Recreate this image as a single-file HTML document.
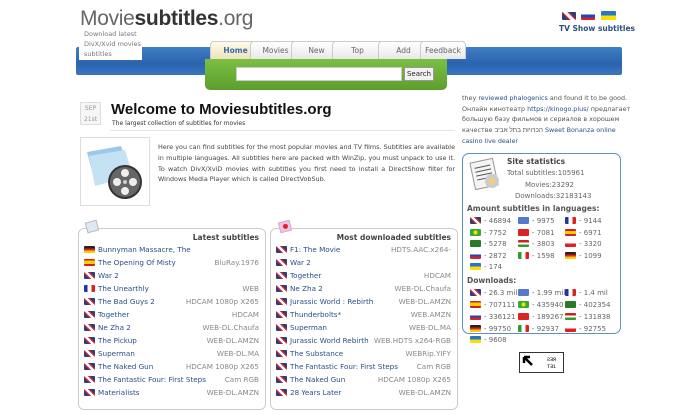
<!DOCTYPE html>
<html><head><meta charset="utf-8"><style>
*{margin:0;padding:0;box-sizing:border-box}
body{width:700px;height:416px;background:#fff;font-family:Verdana,"DejaVu Sans","Liberation Sans",sans-serif;font-size:7px;color:#444;position:relative;overflow:hidden}
.a{position:absolute}
a{color:#2a4f86;text-decoration:none}
.f{display:inline-block;width:11px;height:7px;vertical-align:-1px;margin-right:3px;border-radius:1px}
.uk{background:linear-gradient(45deg,#2b3e7a 30%,#c8283c 30%,#c8283c 40%,#fff 40%,#fff 60%,#c8283c 60%,#c8283c 70%,#2b3e7a 70%)}
.de{background:linear-gradient(#222 33%,#d22 33%,#d22 66%,#fc0 66%)}
.es{background:linear-gradient(#c22 25%,#fc0 25%,#fc0 75%,#c22 75%)}
.fr{background:linear-gradient(90deg,#23a 33%,#fff 33%,#fff 66%,#d22 66%)}
.br{background:radial-gradient(circle,#fd0 30%,#3a3 32%)}
.tr{background:#d22}
.it{background:linear-gradient(90deg,#393 33%,#fff 33%,#fff 66%,#d22 66%)}
.hu{background:linear-gradient(#c22 33%,#fff 33%,#fff 66%,#393 66%)}
.ru{background:linear-gradient(#fff 33%,#24b 33%,#24b 66%,#d22 66%)}
.ua{background:linear-gradient(#27c 50%,#fd0 50%)}
.pl{background:linear-gradient(#fff 50%,#d22 50%)}
.sa{background:#2a7a2a}
.gr{background:#5577cc}
.box{border:1px solid #ccc;border-radius:6px;background:#fff}
.row{position:absolute;left:5px;right:6px;height:13px;line-height:13px;font-size:7.2px;white-space:nowrap}
.row span.r{position:absolute;right:0;color:#888}
.tab{position:absolute;top:41px;height:18px;width:51px;border:1px solid #ccc;border-bottom:none;border-radius:4px 4px 0 0;background:linear-gradient(#fff,#e8e8e8);text-align:center;line-height:17px;font-size:7.5px;color:#666}
.st{position:absolute;font-size:7px;color:#666;white-space:nowrap}
</style></head><body>
<div class="a" style="left:80px;top:7px;font-family:'Liberation Sans',Arial,sans-serif;font-size:21px;color:#555;letter-spacing:-0.3px"><span style="color:#666">Movie</span><b style="color:#333">subtitles</b><span style="color:#666">.org</span></div>
<div class="a" style="left:76px;top:47px;width:546px;height:28px;background:linear-gradient(#3f7fc6,#2a63ad 60%,#3a76bf);border-radius:2px"></div>
<div class="a" style="left:79px;top:29px;width:63px;height:31px;background:#fff;font-size:6.5px;line-height:10px;color:#777;padding-left:5px">Download latest<br>DivX/Xvid movies<br>subtitles</div>
<div class="tab" style="left:210px;background:linear-gradient(#fffbe8,#ece2be);color:#3b6aa0;font-weight:bold">Home</div>
<div class="tab" style="left:250px">Movies</div>
<div class="tab" style="left:291px">New</div>
<div class="tab" style="left:332px">Top</div>
<div class="tab" style="left:378px">Add</div>
<div class="tab" style="left:420px;width:46px">Feedback</div>
<div class="a" style="left:205px;top:59px;width:242px;height:31px;background:linear-gradient(#7cbf43,#5d9e2c);border-radius:0 0 5px 5px"></div>
<div class="a" style="left:236px;top:67px;width:166px;height:14px;background:#fff;border:1px solid #ccc"></div>
<div class="a" style="left:404px;top:67px;width:30px;height:14px;background:#f2f2f2;border:1px solid #999;font-size:7px;line-height:12px;text-align:center;color:#222">Search</div>
<div class="a" style="left:562px;top:12px;width:14px;height:9px" ><span class="f uk" style="width:14px;height:8px"></span></div>
<div class="a" style="left:581px;top:12px"><span class="f ru" style="width:14px;height:8px"></span></div>
<div class="a" style="left:601px;top:11px"><span class="f ua" style="width:15px;height:9px"></span></div>
<div class="a" style="left:559px;top:24px;font-size:7.5px;font-weight:bold;color:#2a4f86">TV Show subtitles</div>

<div class="a" style="left:80px;top:102px;width:21px;height:23px;border:1px solid #ddd;background:#f6f6f6;font-size:6px;color:#999;text-align:center;line-height:11px">SEP<br>21st</div>
<div class="a" style="left:111px;top:101px;font-family:'Liberation Sans',Arial,sans-serif;font-weight:bold;font-size:15px;color:#111">Welcome to Moviesubtitles.org</div>
<div class="a" style="left:112px;top:120px;font-size:6px;color:#333">The largest collection of subtitles for movies</div>
<div class="a" style="left:110px;top:130px;width:345px;height:1px;background:#e6e6e6"></div>
<div class="a" style="left:80px;top:137px;width:70px;height:69px;border:1px solid #ddd;background:#fff">
<svg width="68" height="67" viewBox="0 0 68 67"><path d="M6 14 L40 8 L50 34 L14 44 Z" fill="#9cc9ea"/><path d="M8 18 L44 12 L52 38 L14 48 Z" fill="#c5e2f5"/><circle cx="44" cy="44" r="17" fill="#333"/><circle cx="44" cy="44" r="15" fill="#666"/><circle cx="44" cy="35" r="4" fill="#eee"/><circle cx="44" cy="53" r="4" fill="#eee"/><circle cx="36" cy="44" r="4" fill="#eee"/><circle cx="52" cy="44" r="4" fill="#eee"/><circle cx="44" cy="44" r="2" fill="#ccc"/></svg></div>
<div class="a" style="left:158px;top:142px;width:297px;font-size:6.4px;line-height:10.8px;color:#444;text-align:justify">Here you can find subtitles for the most popular movies and TV films. Subtitles are available in multiple languages. All subtitles here are packed with WinZip, you must unpack to use it. To watch DivX/XviD movies with subtitles you first need to install a DirectShow filter for Windows Media Player which is called DirectVobSub.</div>

<div class="a box" style="left:78px;top:228px;width:188px;height:182px">
<div class="a" style="right:6px;top:4px;font-weight:bold;font-size:7.5px;color:#444">Latest subtitles</div>
<div class="row" style="top:14px"><span class="f de"></span><a>Bunnyman Massacre, The</a></div>
<div class="row" style="top:27px"><span class="f es"></span><a>The Opening Of Misty</a><span class="r">BluRay.1976</span></div>
<div class="row" style="top:40px"><span class="f uk"></span><a>War 2</a></div>
<div class="row" style="top:53px"><span class="f fr"></span><a>The Unearthly</a><span class="r">WEB</span></div>
<div class="row" style="top:66px"><span class="f uk"></span><a>The Bad Guys 2</a><span class="r">HDCAM 1080p X265</span></div>
<div class="row" style="top:79px"><span class="f uk"></span><a>Together</a><span class="r">HDCAM</span></div>
<div class="row" style="top:92px"><span class="f uk"></span><a>Ne Zha 2</a><span class="r">WEB-DL.Chaufa</span></div>
<div class="row" style="top:105px"><span class="f uk"></span><a>The Pickup</a><span class="r">WEB-DL.AMZN</span></div>
<div class="row" style="top:118px"><span class="f uk"></span><a>Superman</a><span class="r">WEB-DL.MA</span></div>
<div class="row" style="top:131px"><span class="f uk"></span><a>The Naked Gun</a><span class="r">HDCAM 1080p X265</span></div>
<div class="row" style="top:144px"><span class="f uk"></span><a>The Fantastic Four: First Steps</a><span class="r">Cam RGB</span></div>
<div class="row" style="top:157px"><span class="f uk"></span><a>Materialists</a><span class="r">WEB-DL.AMZN</span></div>
</div>
<div class="a" style="left:86px;top:221px;width:12px;height:11px;background:#dde9f5;border:1px solid #bbb;transform:rotate(-15deg)"></div>

<div class="a box" style="left:270px;top:228px;width:188px;height:182px">
<div class="a" style="right:6px;top:4px;font-weight:bold;font-size:7.5px;color:#444">Most downloaded subtitles</div>
<div class="row" style="top:14px"><span class="f uk"></span><a>F1: The Movie</a><span class="r">HDTS.AAC.x264-</span></div>
<div class="row" style="top:27px"><span class="f uk"></span><a>War 2</a></div>
<div class="row" style="top:40px"><span class="f uk"></span><a>Together</a><span class="r">HDCAM</span></div>
<div class="row" style="top:53px"><span class="f uk"></span><a>Ne Zha 2</a><span class="r">WEB-DL.Chaufa</span></div>
<div class="row" style="top:66px"><span class="f uk"></span><a>Jurassic World : Rebirth</a><span class="r">WEB-DL.AMZN</span></div>
<div class="row" style="top:79px"><span class="f uk"></span><a>Thunderbolts*</a><span class="r">WEB.AMZN</span></div>
<div class="row" style="top:92px"><span class="f uk"></span><a>Superman</a><span class="r">WEB-DL.MA</span></div>
<div class="row" style="top:105px"><span class="f uk"></span><a>Jurassic World Rebirth</a><span class="r">WEB.HDTS x264-RGB</span></div>
<div class="row" style="top:118px"><span class="f uk"></span><a>The Substance</a><span class="r">WEBRip.YIFY</span></div>
<div class="row" style="top:131px"><span class="f uk"></span><a>The Fantastic Four: First Steps</a><span class="r">Cam RGB</span></div>
<div class="row" style="top:144px"><span class="f uk"></span><a>The Naked Gun</a><span class="r">HDCAM 1080p X265</span></div>
<div class="row" style="top:157px"><span class="f uk"></span><a>28 Years Later</a><span class="r">WEB-DL.AMZN</span></div>
</div>
<div class="a" style="left:279px;top:221px;width:12px;height:11px;background:#fbe;border:1px solid #bbb;transform:rotate(-15deg)"><div style="width:5px;height:5px;background:#d22;border-radius:50%;margin:2px 3px"></div></div>

<div class="a" style="left:462px;top:93px;width:170px;font-size:6.4px;line-height:10.6px;color:#555;white-space:nowrap">they <a>reviewed</a> <a>phalogenics</a> and found it to be good.<br>Онлайн кинотеатр <a>https://kinogo.plus/</a> предлагает<br>большую базу фильмов и сериалов в хорошем<br>качестве <span style="font-family:'Liberation Sans','DejaVu Sans',sans-serif">הכרויות בתל אביב</span> <a>Sweet Bonanza online</a><br><a>casino live dealer</a></div>

<div class="a" style="left:462px;top:153px;width:159px;height:181px;border:1px solid #5d8fc8;border-radius:7px;background:#fff"></div>
<div class="a" style="left:472px;top:160px;width:24px;height:28px;background:#f4f4f4;border:1px solid #999;transform:rotate(-12deg)"><div style="margin:5px 3px;height:1px;background:#555;box-shadow:0 4px #555,0 8px #555,0 12px #555"></div></div>
<div class="a" style="left:485px;top:174px;width:14px;height:14px;border-radius:50%;background:radial-gradient(#fc6 25%,#ccc 30%)"></div>
<div class="st" style="left:507px;top:157px;font-weight:bold;color:#444;font-size:7.5px">Site statistics</div>
<div class="st" style="left:507px;top:169px">Total subtitles:105961</div>
<div class="st" style="left:525px;top:181px">Movies:23292</div>
<div class="st" style="left:515px;top:192px">Downloads:32183143</div>
<div class="st" style="left:467px;top:204px;font-weight:bold;color:#555;font-size:7.5px">Amount subtitles in languages:</div>
<div class="st" style="left:470px;top:217px"><span class="f uk"></span>- 46894</div>
<div class="st" style="left:518px;top:217px"><span class="f gr"></span>- 9975</div>
<div class="st" style="left:565px;top:217px"><span class="f fr"></span>- 9144</div>
<div class="st" style="left:470px;top:229px"><span class="f br"></span>- 7752</div>
<div class="st" style="left:518px;top:229px"><span class="f tr"></span>- 7081</div>
<div class="st" style="left:565px;top:229px"><span class="f es"></span>- 6971</div>
<div class="st" style="left:470px;top:240px"><span class="f sa"></span>- 5278</div>
<div class="st" style="left:518px;top:240px"><span class="f hu"></span>- 3803</div>
<div class="st" style="left:565px;top:240px"><span class="f pl"></span>- 3320</div>
<div class="st" style="left:470px;top:252px"><span class="f ru"></span>- 2872</div>
<div class="st" style="left:518px;top:252px"><span class="f it"></span>- 1598</div>
<div class="st" style="left:565px;top:252px"><span class="f de"></span>- 1099</div>
<div class="st" style="left:470px;top:263px"><span class="f ua"></span>- 174</div>
<div class="st" style="left:467px;top:276px;font-weight:bold;color:#555;font-size:7.5px">Downloads:</div>
<div class="st" style="left:470px;top:289px"><span class="f uk"></span>- 26.3 mil</div>
<div class="st" style="left:518px;top:289px"><span class="f gr"></span>- 1.99 mil</div>
<div class="st" style="left:565px;top:289px"><span class="f fr"></span>- 1.4 mil</div>
<div class="st" style="left:470px;top:301px"><span class="f es"></span>- 707111</div>
<div class="st" style="left:518px;top:301px"><span class="f br"></span>- 435940</div>
<div class="st" style="left:565px;top:301px"><span class="f sa"></span>- 402354</div>
<div class="st" style="left:470px;top:313px"><span class="f ru"></span>- 336121</div>
<div class="st" style="left:518px;top:313px"><span class="f tr"></span>- 189267</div>
<div class="st" style="left:565px;top:313px"><span class="f hu"></span>- 131838</div>
<div class="st" style="left:470px;top:325px"><span class="f de"></span>- 99750</div>
<div class="st" style="left:518px;top:325px"><span class="f it"></span>- 92937</div>
<div class="st" style="left:565px;top:325px"><span class="f pl"></span>- 92755</div>
<div class="st" style="left:470px;top:336px"><span class="f ua"></span>- 9608</div>
<div class="a" style="left:519px;top:352px;width:45px;height:21px;border:1px solid #333;background:#fff"><svg width="43" height="19"><path d="M4 4 L12 12 M4 4 L10 4 M4 4 L4 10" stroke="#000" stroke-width="2.5" fill="none"/><text x="27" y="8" font-size="5" font-family="Liberation Mono,monospace">ƧƎЯ</text><text x="27" y="15" font-size="5" font-family="Liberation Mono,monospace">TƎ1</text></svg></div>
</body></html>
